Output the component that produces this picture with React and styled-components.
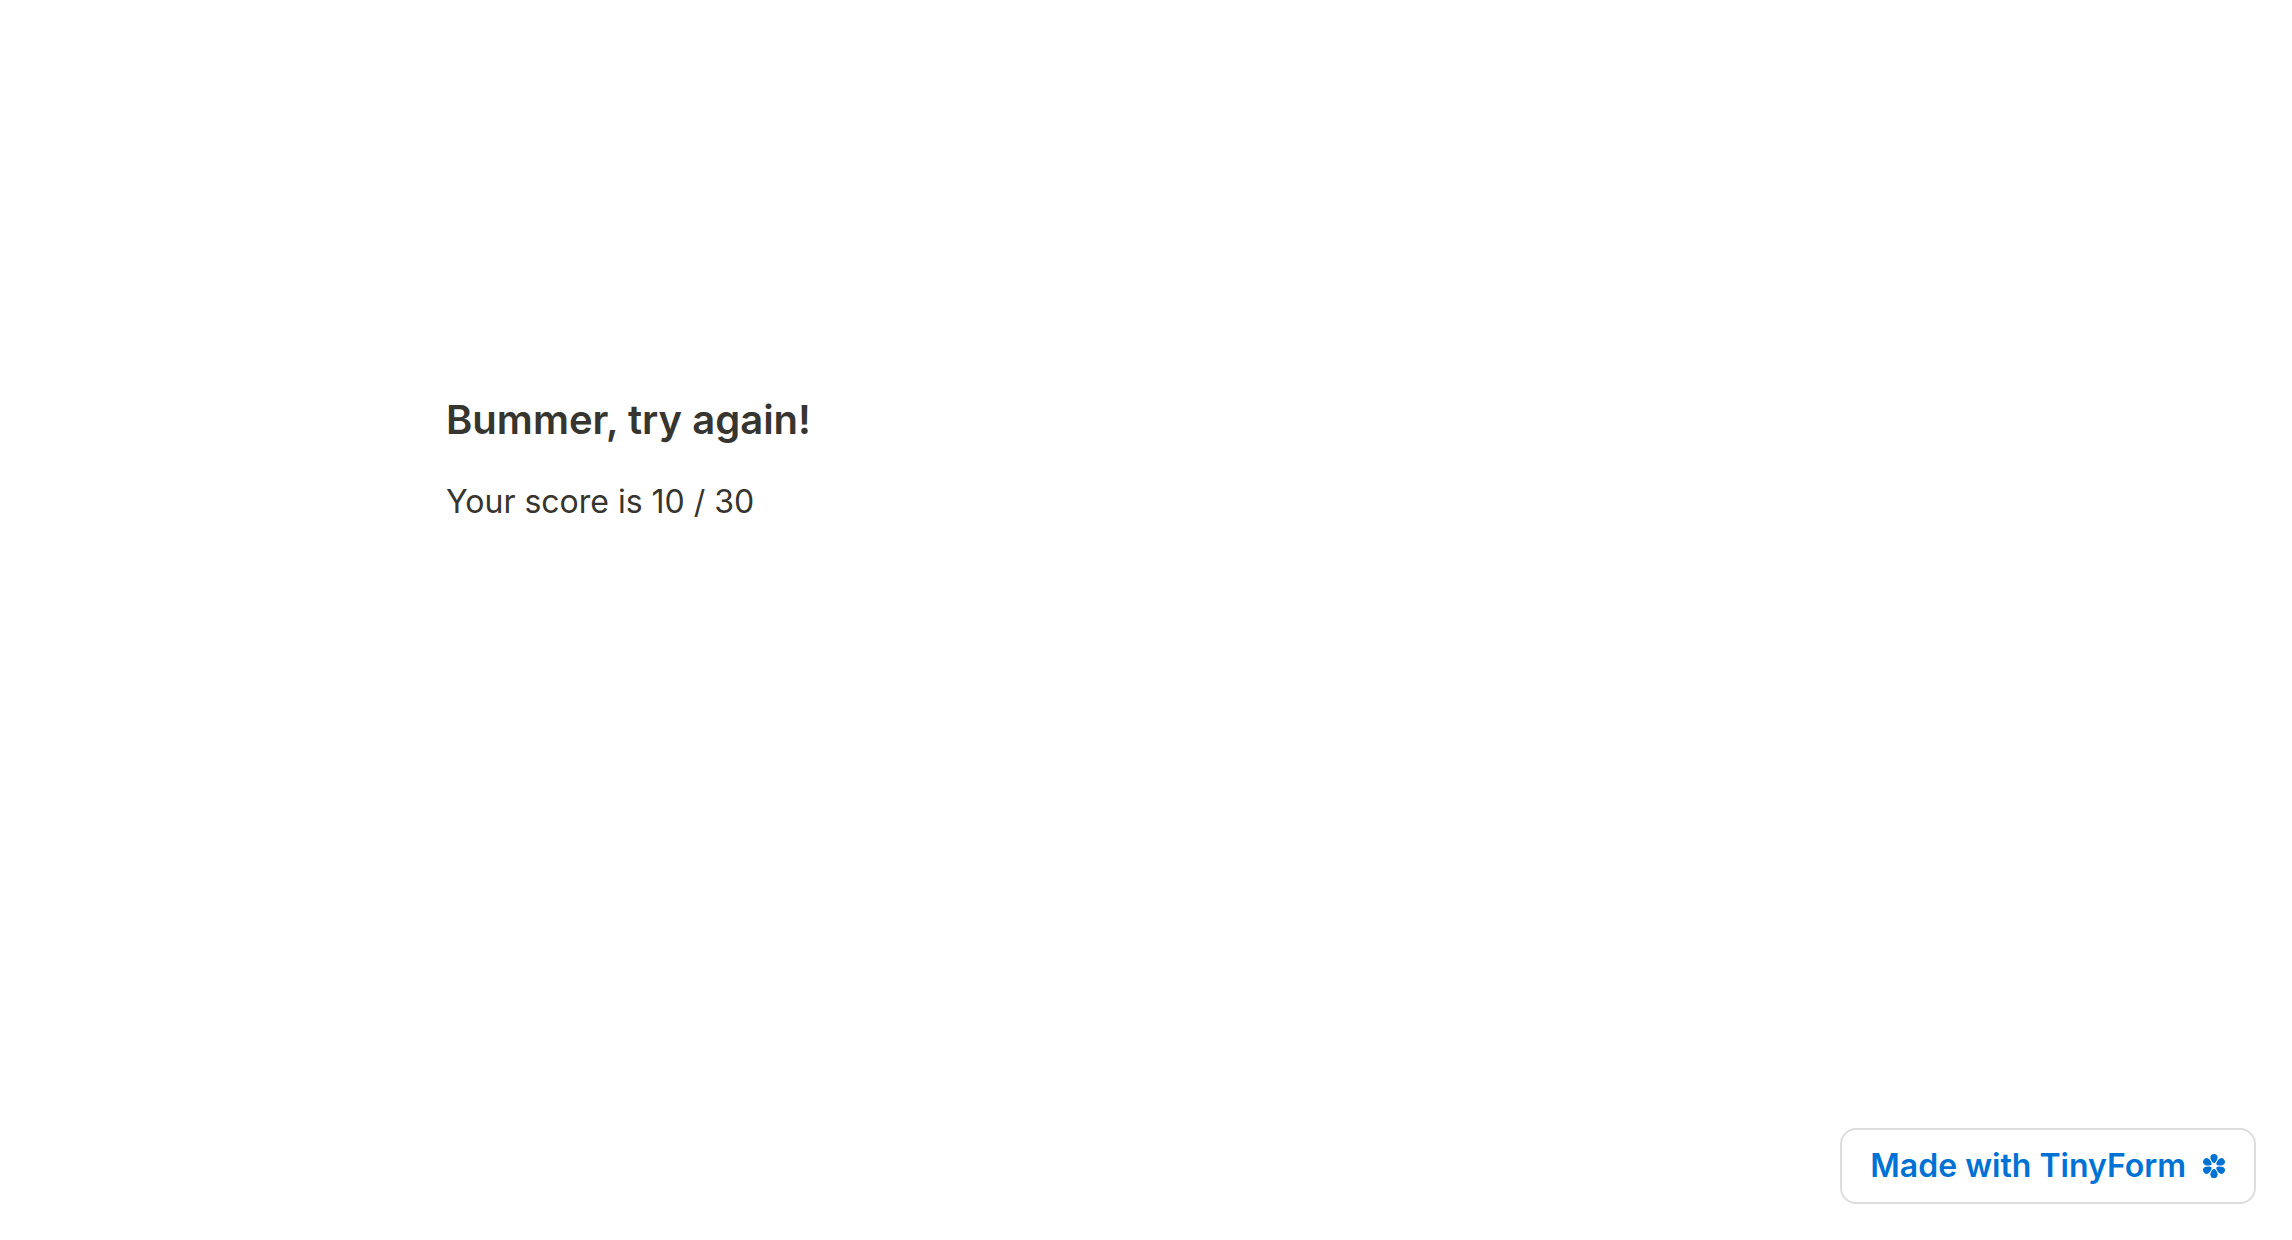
import React from "react";
import styled, { createGlobalStyle } from "styled-components";

const GlobalStyle = createGlobalStyle`
  *, *::before, *::after { box-sizing: border-box; }
  body {
    margin: 0;
    background: #ffffff;
    color: #37352f;
    font-family: Inter, "Liberation Sans", sans-serif;
  }
`;

const Page = styled.main`
  min-height: 100vh;
  display: flex;
  flex-direction: column;
  align-items: center;
  padding: 394px 48px 0;
`;

const Content = styled.section`
  width: 100%;
  max-width: 1400px;
  display: flex;
  flex-direction: column;
  gap: 32px;
`;

const Heading = styled.h1`
  margin: 0;
  font-size: 40px;
  line-height: 52px;
  font-weight: 600;
`;

const Score = styled.p`
  margin: 0;
  font-size: 32px;
  line-height: 48px;
`;

const Badge = styled.a`
  position: fixed;
  right: 36px;
  bottom: 36px;
  display: flex;
  align-items: center;
  gap: 16px;
  padding: 12px 28px;
  border: 2px solid #dddddd;
  border-radius: 16px;
  background: #ffffff;
  color: #0072d3;
  font-size: 32px;
  line-height: 48px;
  font-weight: 600;
  text-decoration: none;
`;

const Flower = styled.svg`
  width: 24px;
  height: 24px;
  fill: currentColor;
`;

const petals = [0, 60, 120, 180, 240, 300];

export default function App() {
  return (
    <>
      <GlobalStyle />
      <Page>
        <Content>
          <Heading>Bummer, try again!</Heading>
          <Score>Your score is 10 / 30</Score>
        </Content>
      </Page>
      <Badge href="#">
        Made with TinyForm
        <Flower viewBox="-12 -12 24 24" aria-hidden="true">
          {petals.map((angle) => (
            <path
              key={angle}
              d="M0 -2.8 C-1.2 -2.8 -3.6 -6.2 -3.6 -8.4 A3.6 3.6 0 0 1 3.6 -8.4 C3.6 -6.2 1.2 -2.8 0 -2.8Z"
              transform={`rotate(${angle})`}
            />
          ))}
        </Flower>
      </Badge>
    </>
  );
}
